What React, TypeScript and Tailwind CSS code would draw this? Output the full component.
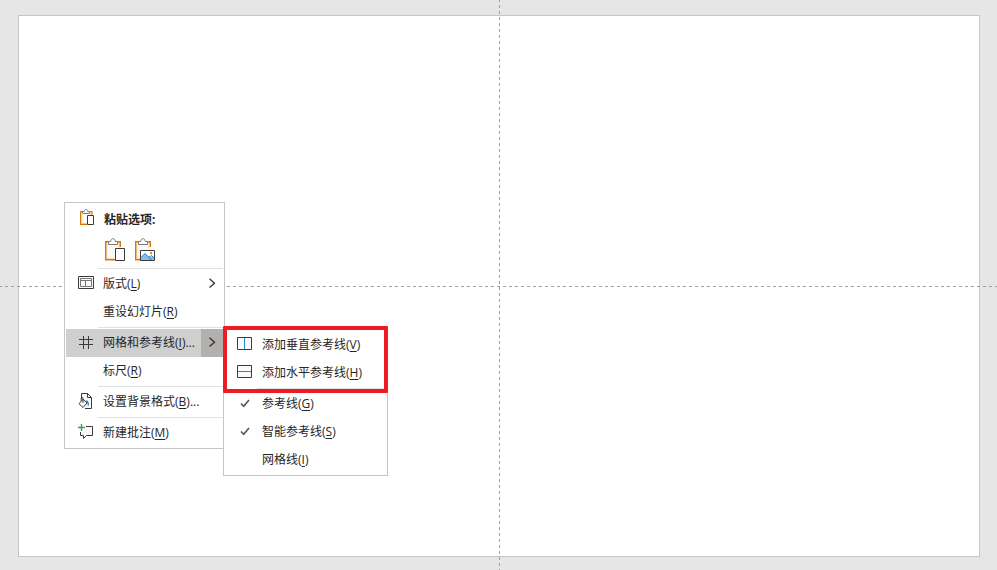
import { useState } from 'react'
import type { ReactNode } from 'react'

interface ItemProps {
  label: string
  accessKey: string
  icon?: ReactNode
  suffix?: string
  submenu?: boolean
  active?: boolean
  onClick?: () => void
}

function ClipboardIcon() {
  return (
    <svg width="18" height="22" viewBox="-1 0 18 22" fill="none" aria-hidden="true">
      <path d="M4 4.500v10h5M12.500 4v2" stroke="#fbe3a6" />
      <path d="M5 2.600H2.600v12.800H9M12 2.600h1.900V6" stroke="#d97706" strokeWidth="1.200" />
      <path d="M4.500 4.500v-2h1.800c.2-2.700 3.200-2.700 3.400 0h1.800v2z" fill="#fff" stroke="#7a7a7a" />
      <path d="M9.500 6.500h6v9h-6z" fill="#fff" stroke="#3b3a39" />
    </svg>
  )
}

function PasteIcon({ picture = false }: { picture?: boolean }) {
  return (
    <svg width="22" height="24" viewBox="0 0 22 24" fill="none" aria-hidden="true">
      <path d="M1.700 3.600h14.600v18.200H1.700z" fill="#fafafa" />
      <path d="M2.900 5v15.500H10M15 5v5" stroke="#fbe3a6" />
      <path d="M4.500 3.700H1.700v18.100H11M13.500 3.700h2.800V9" stroke="#d97706" strokeWidth="1.400" />
      <path d="M4.500 6.500V3.500h2.200c.2-1.800 1-2.800 2.300-2.800s2.100 1 2.300 2.800h2.200v3z" fill="#fff" stroke="#7a7a7a" />
      {picture ? (
        <>
          <path d="M6.500 12.500h14v10h-14z" fill="#fff" stroke="#3b3a39" />
          <path d="M7 19.500l4-4 4.500 4.500 2-2 2.500 2.500V22H7z" fill="#83beec" />
          <path d="M7 19.500l4-4 6.500 6.500M14.500 19.500l3-2 2.500 2.500" stroke="#1e78b8" />
          <circle cx="17" cy="15" r="1.200" fill="#e08a3c" />
        </>
      ) : (
        <path d="M11.500 10.500h9v12h-9z" fill="#fff" stroke="#3b3a39" />
      )}
    </svg>
  )
}

function LayoutIcon() {
  return (
    <svg width="16" height="16" viewBox="0 0 16 16" fill="none" aria-hidden="true">
      <path d="M.5.5h15v12H.5z" fill="#fafafa" stroke="#3b3a39" />
      <path d="M2.500 2.500h11v8h-11zM2.500 4.500h11M7.500 4.500v6" stroke="#797775" />
    </svg>
  )
}

function GridIcon() {
  return (
    <svg width="16" height="16" viewBox="0 0 16 16" fill="none" stroke="#3b3a39" aria-hidden="true">
      <path d="M1 4.500h14M1 9.500h14M5.500 1v13M10.500 1v13" />
    </svg>
  )
}

function BackgroundIcon() {
  return (
    <svg width="16" height="18" viewBox="0 1 16 18" fill="none" aria-hidden="true">
      <path d="M3.500 7V1.500h6l4 4v11H7" fill="#fafafa" stroke="#3b3a39" />
      <path d="M9.500 1.500v4h4" stroke="#3b3a39" />
      <path d="M5 7.200L9 11l-4 4.500-4-3.800z" fill="#fff" stroke="#3b3a39" />
      <path d="M5 11V6.500c0-1.500-1.800-1.500-1.800 0V9" stroke="#3b3a39" />
      <path d="M8 9c1.800.4 2.500 1.800 2.300 4.500" stroke="#1e8bcd" strokeWidth="1.400" />
    </svg>
  )
}

function CommentIcon() {
  return (
    <svg width="16" height="18" viewBox="0 0 16 18" fill="none" aria-hidden="true">
      <path d="M8 2.500h6.500v9h-6l-3 3v-3h-3V8" fill="#fafafa" stroke="#3b3a39" />
      <path d="M3.500 0v7M0 3.500h7" stroke="#33a058" strokeWidth="1.400" />
    </svg>
  )
}

function GuideIcon({ horizontal = false }: { horizontal?: boolean }) {
  return (
    <svg width="16" height="16" viewBox="0 0 16 16" fill="none" aria-hidden="true">
      <path d="M.5.5h14v12H.5z" fill="#fafafa" stroke="#3b3a39" />
      <path d={horizontal ? 'M1 6.500h13' : 'M7.500 1v11'} stroke="#1e8bcd" />
    </svg>
  )
}

function CheckIcon() {
  return (
    <svg width="10" height="10" viewBox="0 0 10 10" fill="none" stroke="#555" strokeWidth="1.600" aria-hidden="true">
      <path d="M1 4.500l2.700 2.800L9 1" />
    </svg>
  )
}

function ChevronIcon() {
  return (
    <svg width="8" height="12" viewBox="0 0 8 12" fill="none" stroke="#333" strokeWidth="1.300" aria-hidden="true">
      <path d="M1.500.8L6.500 5.200l-5 4.400" />
    </svg>
  )
}

function Separator() {
  return <div role="separator" className="my-px ml-8 h-px bg-[#e1e1e1]" />
}

function MenuItem({ label, accessKey, icon, suffix = '', submenu, active, onClick }: ItemProps) {
  return (
    <button
      type="button"
      role="menuitem"
      aria-haspopup={submenu ? 'menu' : undefined}
      onClick={onClick}
      className={`flex h-7 w-full items-center text-left ${active ? 'bg-[#cfcfcf]' : 'hover:bg-[#e8e8e8]'}`}
    >
      <span className="flex w-10 shrink-0 justify-center">{icon}</span>
      <span className="-ml-1 flex-1 whitespace-nowrap pl-px">
        {label}(<u className="underline-offset-2">{accessKey}</u>){suffix}
      </span>
      {submenu && (
        <span className={`flex w-[22px] shrink-0 items-center justify-center self-stretch ${active ? 'bg-[#b3b0ad]' : ''}`}>
          <ChevronIcon />
        </span>
      )}
    </button>
  )
}

function GuidesMenu() {
  const [checked, setChecked] = useState({ guides: true, smart: true, grid: false })

  const toggle = (key: keyof typeof checked) => setChecked({ ...checked, [key]: !checked[key] })

  return (
    <div role="menu" className="absolute left-[223px] top-[329px] w-[165px] border border-[#c6c6c6] bg-white p-px">
      <MenuItem label="添加垂直参考线" accessKey="V" icon={<GuideIcon />} />
      <MenuItem label="添加水平参考线" accessKey="H" icon={<GuideIcon horizontal />} />
      <Separator />
      <MenuItem
        label="参考线"
        accessKey="G"
        icon={checked.guides && <CheckIcon />}
        onClick={() => toggle('guides')}
      />
      <MenuItem
        label="智能参考线"
        accessKey="S"
        icon={checked.smart && <CheckIcon />}
        onClick={() => toggle('smart')}
      />
      <MenuItem
        label="网格线"
        accessKey="I"
        icon={checked.grid && <CheckIcon />}
        onClick={() => toggle('grid')}
      />
    </div>
  )
}

function ContextMenu() {
  return (
    <div role="menu" className="absolute left-[64px] top-[202px] w-[161px] border border-[#c6c6c6] bg-white p-px">
      <div className="flex h-8 items-center font-bold">
        <span className="flex w-10 shrink-0 justify-center">
          <ClipboardIcon />
        </span>
        <span className="-ml-1 pl-0.5">粘贴选项:</span>
      </div>
      <div className="flex h-[31px] items-start gap-2 pt-0.5 pl-[38px]">
        <button type="button" aria-label="使用目标主题">
          <PasteIcon />
        </button>
        <button type="button" aria-label="图片">
          <PasteIcon picture />
        </button>
      </div>
      <Separator />
      <MenuItem label="版式" accessKey="L" icon={<LayoutIcon />} submenu />
      <MenuItem label="重设幻灯片" accessKey="R" />
      <Separator />
      <MenuItem label="网格和参考线" accessKey="I" suffix="..." icon={<GridIcon />} submenu active />
      <MenuItem label="标尺" accessKey="R" />
      <Separator />
      <MenuItem label="设置背景格式" accessKey="B" suffix="..." icon={<BackgroundIcon />} />
      <Separator />
      <MenuItem label="新建批注" accessKey="M" icon={<CommentIcon />} />
    </div>
  )
}

export default function App() {
  return (
    <main className="relative flex h-screen overflow-hidden bg-[#e6e6e6] pt-[15px] pr-[17px] pb-[13px] pl-[18px] font-['Open_Sans','Noto_Sans_CJK_SC',sans-serif] text-xs text-[#262626]">
      <section className="relative flex-1 border border-[#c6c6c6] bg-white" aria-label="幻灯片">
        <div className="absolute -top-4 -bottom-4 left-1/2 w-px bg-[repeating-linear-gradient(to_bottom,#a0a0a0_0_2px,transparent_2px_5px,#a0a0a0_5px_6px)]" />
        <div className="absolute top-1/2 -left-5 -right-5 h-px bg-[repeating-linear-gradient(to_right,#a0a0a0_0_3px,transparent_3px_6px)]" />
      </section>
      <ContextMenu />
      <GuidesMenu />
      <div className="pointer-events-none absolute left-[223px] top-[326px] h-[67px] w-[165px] rounded-[1px] border-4 border-[#ed1c24]" />
    </main>
  )
}
